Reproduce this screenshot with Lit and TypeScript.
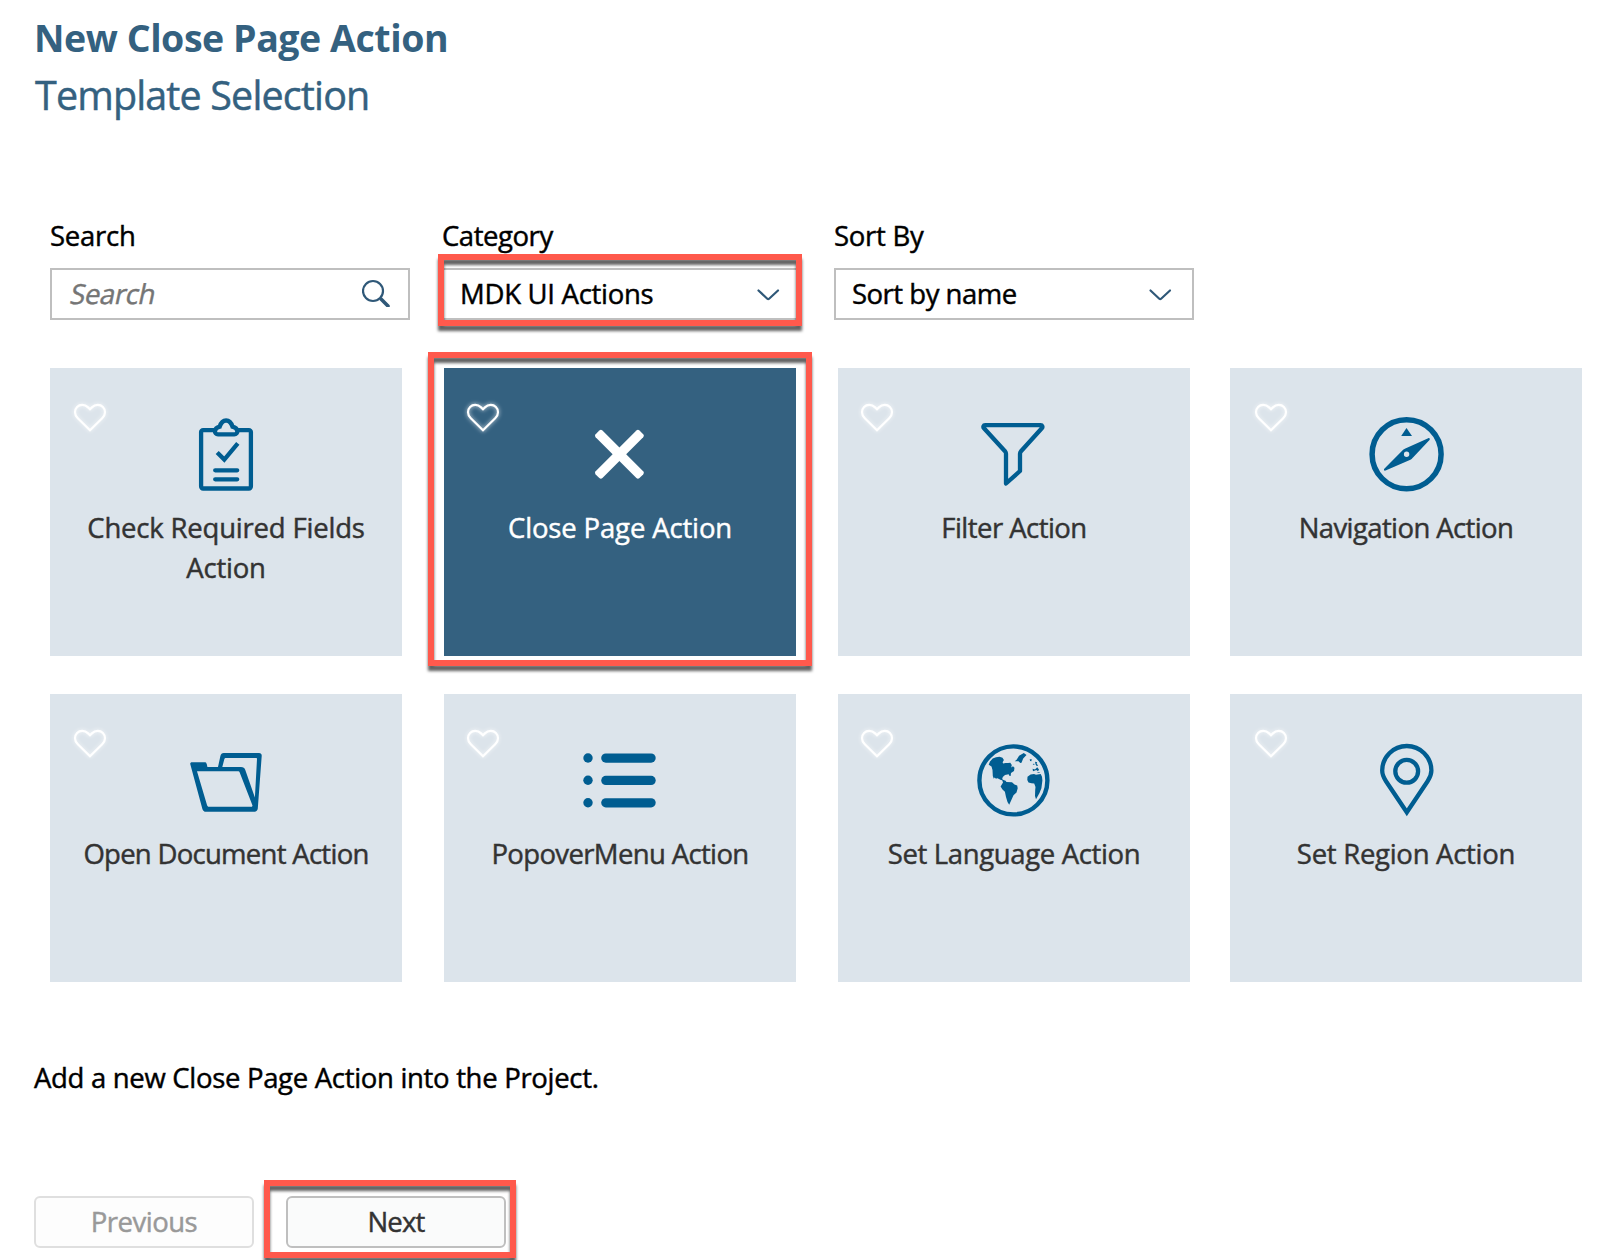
import { LitElement, html, css, svg, SVGTemplateResult } from "lit";
import { customElement, property, state } from "lit/decorators.js";
import { classMap } from "lit/directives/class-map.js";
import { styleMap } from "lit/directives/style-map.js";

interface Template {
  id: string;
  name: string;
  tracking: number;
}

const TEMPLATES: Template[] = [
  { id: "check", name: "Check Required Fields Action", tracking: -0.2 },
  { id: "close", name: "Close Page Action", tracking: -0.15 },
  { id: "filter", name: "Filter Action", tracking: -0.54 },
  { id: "navigation", name: "Navigation Action", tracking: -0.6 },
  { id: "document", name: "Open Document Action", tracking: -0.72 },
  { id: "menu", name: "PopoverMenu Action", tracking: -0.64 },
  { id: "language", name: "Set Language Action", tracking: -0.36 },
  { id: "region", name: "Set Region Action", tracking: -0.28 },
];

// All tile icons share an 84x84 box.
const ICONS: Record<string, SVGTemplateResult> = {
  check: svg`
    <g fill="none" stroke="currentColor" stroke-width="4.3">
      <rect x="17.1" y="18.1" width="49.8" height="58.4" rx="2"/>
      <path fill="#dce4eb" d="M34 22.4H50.3a3 3 0 0 0 3-3.4c-.2-2-2-3.6-4.8-4.3C47.2 10.4 45.2 8.5 42.1 8.5S37 10.4 35.7 14.7C33 15.4 31.2 17 31 19a3 3 0 0 0 3 3.4z"/>
      <path d="M33.2 40.4 40.3 47.6 53.8 31.4"/>
      <path stroke-linecap="round" d="M31.2 58.3H53.2M31.2 67.3H53.2"/>
    </g>`,
  close: svg`
    <g fill="currentColor" transform="translate(41.4 42.3)">
      <rect x="-31" y="-4.8" width="62" height="9.6" rx="2.2" transform="rotate(45)"/>
      <rect x="-31" y="-4.8" width="62" height="9.6" rx="2.2" transform="rotate(-45)"/>
    </g>`,
  filter: svg`
    <path fill="none" stroke="currentColor" stroke-width="4.3" stroke-linejoin="round"
      d="M13.2 13.2H68.6c1.8 0 2.4 1.8 1.2 3.1L49 39.2c-.7.8-1 1.6-1 2.6V59L34 71.5V41.8c0-1-.3-1.8-1-2.6L12 16.3c-1.2-1.3-.6-3.1 1.2-3.1z"/>`,
  navigation: svg`
    <circle cx="42.6" cy="42.2" r="34.5" fill="none" stroke="currentColor" stroke-width="5.5"/>
    <path fill="currentColor" d="M42.5 16 48 24H37.2z"/>
    <path fill="currentColor" fill-rule="evenodd"
      d="M64.2 26.2c1.4-.5 2.2.8 1.3 1.9L49 45.6c-.8.9-1.3 1.5-2.6 2.1L21.6 58.5c-1.4.6-2.2-.8-1.3-1.8L38.4 38.5c.8-.8 1.2-1.3 2.4-1.8zM42.6 39.6a2.7 2.7 0 1 0 0 5.4 2.7 2.7 0 0 0 0-5.4z"/>`,
  document: svg`
    <path fill="currentColor" fill-rule="evenodd"
      d="M8 24.3H20.5c1.7 0 2.3.8 2.9 4.7H34l2.4-11c.5-2 1.5-3 3.3-3H75c1.9 0 2.9 1.2 2.7 3L73.8 70.5c-.2 2-1.4 3.2-3.4 3.2H22c-1.9 0-3-.9-3.6-2.8L6.3 26.3c-.3-1.2.4-2 1.7-2zM13 33.3 23 66.9c.4 1.2.9 1.8 2 1.8H68L68.5 67.6 55.8 34.8c-.4-1.1-.9-1.5-2-1.5zM38.3 29H57c2.4 0 3.5.9 4.2 2.8L70.9 59.5 73 21c0-.7-.3-1-1-1H42c-1 0-1.4.3-1.7 1.3z"/>`,
  menu: svg`
    <g fill="currentColor">
      <circle cx="10" cy="20" r="4.7"/><circle cx="10" cy="42.3" r="4.7"/><circle cx="10" cy="64.7" r="4.7"/>
      <rect x="23.2" y="15.5" width="54.5" height="9.2" rx="4.6"/>
      <rect x="23.2" y="37.8" width="54.5" height="9.2" rx="4.6"/>
      <rect x="23.2" y="60.2" width="54.5" height="9.2" rx="4.6"/>
    </g>`,
  language: svg`
    <circle cx="41.4" cy="42.4" r="34" fill="none" stroke="currentColor" stroke-width="4.4"/>
    <g fill="currentColor">
      <path d="M16.7 26.7 18 23.5 20.7 20.5 24 19.3 27.5 18.7 30.5 19.8 31.9 22 30.6 24.3 31.2 25.6 33.5 24.9 36 25 38.3 24.7 39.8 27 39.2 29.4 41 28.3 42.5 29.8 42 33 39 35 38.6 38 37.6 38 36.6 36.3 33 37 30.8 38.9 30.1 41.3 32 42.6 29 42 26.5 40.8 24.8 40 24.3 41 22.6 39.6 21.8 40.8 20.8 38 20.5 32 19.5 28.5z"/>
      <path d="M30 41.5 33.6 42.7 34.5 44 40 44.2 42.5 46.5 45.2 47.5 45.7 50.3 44.5 54.5 41.5 57.3 39.7 61.3 37.2 66.7 35.5 64 34 59 32.9 53.7 30.5 51.5 28.6 48.5 31 44.6z"/>
      <path d="M42.7 23.3 44.6 21.7 47.1 17.7 51.8 15 54.5 17 51.2 20.5 49.5 24.7 48.3 25 46.5 23.2z"/>
      <path d="M57.7 21.3 59.8 21.2 59.3 23.3 58.1 23zM60.7 26.5 62 25.5 62.5 27zM63 23.7 65.2 24.3 64.6 25.7 66.2 27.5 64.7 28 63.5 26.2zM60.6 30.8 63 31.4 65.2 29.3 67 31.5 66 33.3 64.3 32 61 33.3zM64.5 34.3 67.5 34V35z"/>
      <path d="M55.5 38.7 58.6 36.5 62 36 64 36.7 68.7 36 70 38.7 70.4 42.5 69.4 50.3 67.5 55 64 61.3 63 58 63.2 52 63.5 49 62.2 45.5 59.5 45.3 56.5 44.5 55.3 42z"/>
    </g>`,
  region: svg`
    <g fill="none" stroke="currentColor" stroke-width="4.3">
      <path d="M42.8 74.3 22 43.2C19.4 39.4 18.2 36.4 18.2 32.6a24.6 24.6 0 0 1 49.2 0c0 3.8-1.2 6.8-3.8 10.6z"/>
      <circle cx="42.7" cy="33.3" r="11.4"/>
    </g>`,
};

const base = css`
  * { box-sizing: border-box; }
  .mark {
    position: absolute;
    z-index: 2;
    border: 6px solid #ff594c;
    filter: drop-shadow(0 5.5px 1.7px rgba(0, 0, 0, 0.62));
    pointer-events: none;
  }
`;

@customElement("template-tile")
class TemplateTile extends LitElement {
  @property({ attribute: false }) template!: Template;
  @property({ type: Boolean }) selected = false;

  static styles = [
    base,
    css`
      :host { display: block; width: 352px; position: relative; }
      .tile {
        position: relative;
        height: 288px;
        padding: 44px 24px 0;
        background: #dce4eb;
        color: #333;
        display: flex;
        flex-direction: column;
        align-items: center;
        gap: 12px;
        cursor: pointer;
      }
      .tile.selected { background: #346180; color: #fff; }
      .icon { width: 84px; height: 84px; flex: none; color: #005d91; }
      .selected .icon { color: #fff; }
      .name { line-height: 40px; text-align: center; }
      .heart {
        position: absolute;
        left: var(--heart-left, 20px);
        top: 32px;
        width: 40px;
        height: 36px;
        overflow: visible;
        filter: drop-shadow(0 0 2px rgba(255, 255, 255, 0.8));
      }
      .mark { inset: -16px -16px -10px -16px; }
    `,
  ];

  render() {
    const { id, name, tracking } = this.template;
    return html`
      <div class=${classMap({ tile: true, selected: this.selected })}>
        <svg class="heart" viewBox="0 0 40 36">
          <path fill="none" stroke="#fff" stroke-width="2.2"
            d="M20 30.3 7.8 18.2C5.8 16.2 5 14.3 5 12.2 5 8 8.2 4.9 12.2 4.9c2.4 0 4.2.8 5.9 2.5L20 9.3l1.9-1.9c1.7-1.7 3.5-2.5 5.9-2.5 4 0 7.2 3.1 7.2 7.3 0 2.1-.8 4-2.8 6z"/>
        </svg>
        <svg class="icon" viewBox="0 0 84 84">${ICONS[id]}</svg>
        <div class="name" style=${styleMap({ letterSpacing: `${tracking}px` })}>${name}</div>
      </div>
      ${this.selected ? html`<div class="mark"></div>` : null}
    `;
  }
}

@customElement("app-root")
class AppRoot extends LitElement {
  @state() private selected = "close";

  static styles = [
    base,
    css`
      :host {
        display: block;
        height: 1260px;
        overflow: hidden;
        background: #fff;
        color: #000;
        font: 27.5px "Open Sans", "Noto Sans", sans-serif;
        -webkit-text-stroke: 0.45px currentColor;
      }
      .page { padding: 4px 34px 0; }
      .title, .subtitle { margin: 0; color: #346180; white-space: nowrap; }
      .title { font-size: 37.5px; font-weight: 700; line-height: 67px; letter-spacing: -0.45px; -webkit-text-stroke: 0; }
      .subtitle { font-size: 39.5px; font-weight: 400; line-height: 48px; letter-spacing: -0.87px; padding-left: 1px; }
      .filters { display: flex; gap: 32px; margin: 95px 0 0 16px; }
      .field { width: 360px; }
      .label { height: 54px; line-height: 43px; letter-spacing: -0.25px; }
      .box {
        position: relative;
        height: 52px;
        border: 2px solid #bfbfbf;
        padding: 0 17px 0 16px;
        display: flex;
        justify-content: space-between;
        line-height: 47px;
        letter-spacing: -0.28px;
        white-space: nowrap;
      }
      .box .mark { inset: -16px -2px -8px -6px; }
      .label.category { letter-spacing: -0.45px; }
      .box.sort { letter-spacing: -0.5px; }
      .placeholder { color: #757575; transform: skewX(-12deg); padding-left: 3px; letter-spacing: -0.4px; }
      .glyph { width: 28px; height: 28px; margin-top: 9px; flex: none; fill: none; stroke: #2f5878; stroke-width: 2.2; }
      .search { margin-right: 1px; }
      .tiles {
        display: grid;
        grid-template-columns: 394px 394px 392px 352px;
        row-gap: 38px;
        margin: 48px 0 0 16px;
      }
      .tiles > :nth-child(4n + 2) { --heart-left: 19.4px; }
      .tiles > :nth-child(4n + 3) { --heart-left: 19px; }
      .tiles > :nth-child(4n) { --heart-left: 21px; }
      .description { margin: 75px 0 0; line-height: 41px; letter-spacing: -0.31px; }
      .actions { display: flex; gap: 32px; margin-top: 98px; }
      .button {
        position: relative;
        width: 220px;
        height: 52px;
        border: 2px solid #bfbfbf;
        border-radius: 6px;
        background: #fafbfb;
        color: #333;
        line-height: 47px;
        text-align: center;
        letter-spacing: -0.8px;
      }
      .button.disabled { border-color: #dfdfdf; background: #fdfdfd; color: #999; letter-spacing: -0.5px; }
      .button .mark { inset: -18px -12px -12px -24px; }
    `,
  ];

  private chevron() {
    return html`<svg class="glyph" viewBox="0 0 28 28">
      <path stroke-linecap="round" d="M3.5 11.5 12.3 19.7Q13.2 20.5 14.1 19.7L23 11.5"/>
    </svg>`;
  }

  render() {
    return html`
      <div class="page">
        <h1 class="title">New Close Page Action</h1>
        <h2 class="subtitle">Template Selection</h2>
        <div class="filters">
          <div class="field">
            <div class="label">Search</div>
            <div class="box">
              <span class="placeholder">Search</span>
              <svg class="glyph search" viewBox="0 0 28 28">
                <circle cx="11" cy="12" r="10"/>
                <path stroke-width="3.6" stroke-linecap="round" d="M19.5 20.5 26 27"/>
              </svg>
            </div>
          </div>
          <div class="field">
            <div class="label category">Category</div>
            <div class="box">
              <span>MDK UI Actions</span>
              ${this.chevron()}
              <div class="mark"></div>
            </div>
          </div>
          <div class="field">
            <div class="label">Sort By</div>
            <div class="box sort">
              <span>Sort by name</span>
              ${this.chevron()}
            </div>
          </div>
        </div>
        <div class="tiles">
          ${TEMPLATES.map(
            (t) => html`<template-tile
              .template=${t}
              ?selected=${t.id === this.selected}
              @click=${() => (this.selected = t.id)}
            ></template-tile>`
          )}
        </div>
        <p class="description">Add a new Close Page Action into the Project.</p>
        <div class="actions">
          <div class="button disabled">Previous</div>
          <div class="button">Next<div class="mark"></div></div>
        </div>
      </div>
    `;
  }
}
